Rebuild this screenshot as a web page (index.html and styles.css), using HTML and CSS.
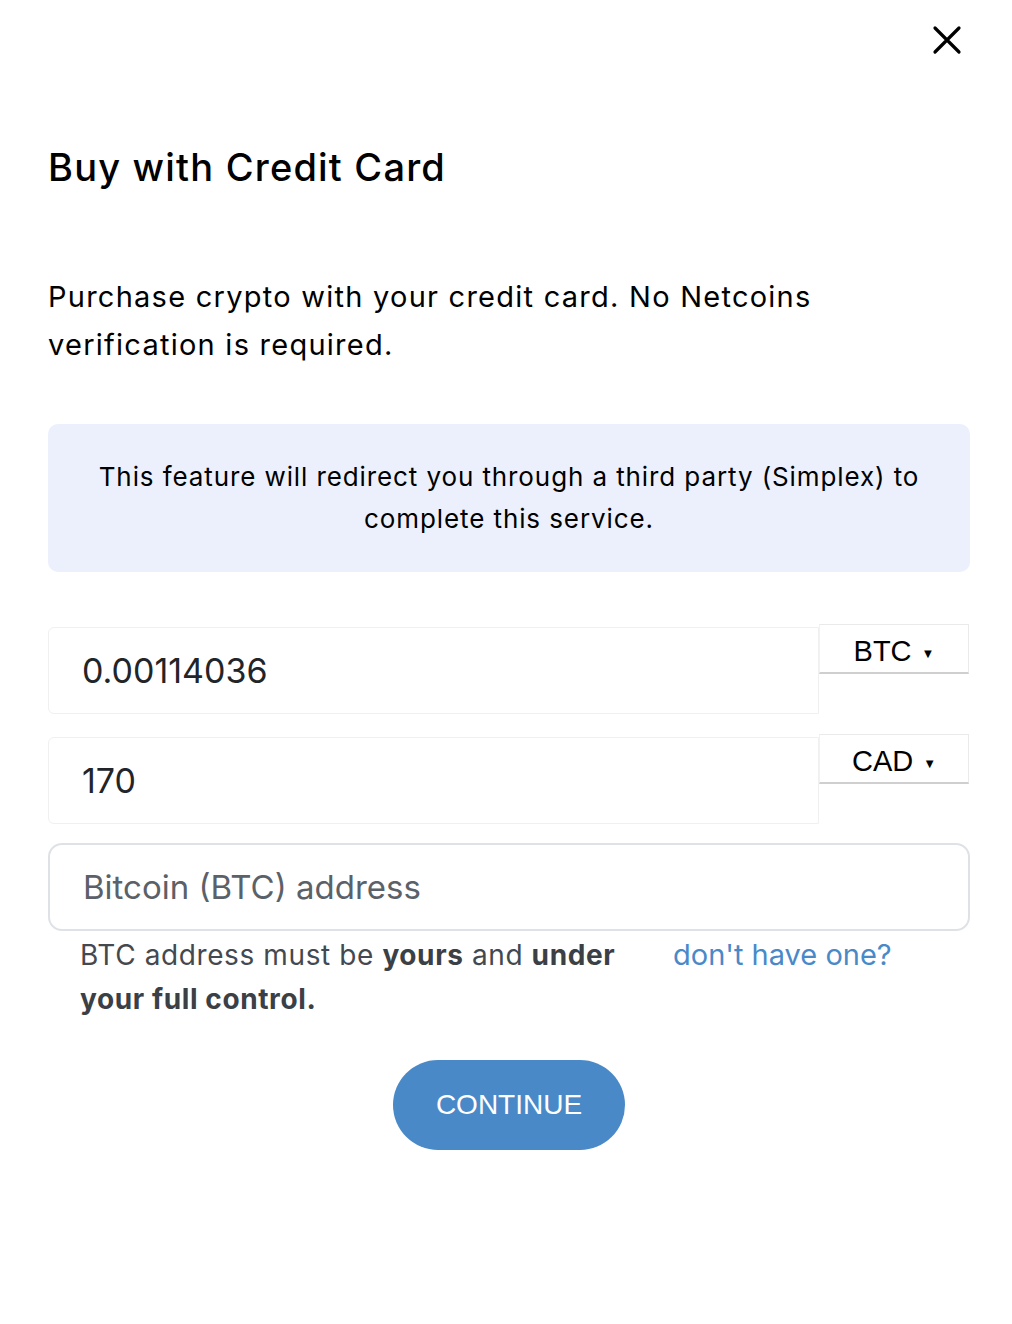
FILE: index.html
```html
<!DOCTYPE html>
<html>
<head>
<meta charset="utf-8">
<link rel="stylesheet" href="styles.css">
</head>
<body>
<div class="modal">
  <div class="top">
    <button class="close" aria-label="Close">
      <svg width="30" height="30" viewBox="0 0 30 30"><path d="M3 3 L27 27 M27 3 L3 27" stroke="#000" stroke-width="3.2" stroke-linecap="round" fill="none"/></svg>
    </button>
  </div>
  <h1 class="title">Buy with Credit Card</h1>
  <p class="lead">Purchase crypto with your credit card. No Netcoins verification is required.</p>
  <div class="info">This feature will redirect you through a third party (Simplex) to complete this service.</div>
  <div class="row">
    <div class="amount">0.00114036</div>
    <div class="select">BTC <span class="caret">▼</span></div>
  </div>
  <div class="row">
    <div class="amount">170</div>
    <div class="select">CAD <span class="caret">▼</span></div>
  </div>
  <div class="address">Bitcoin (BTC) address</div>
  <div class="help">
    <div class="note">BTC address must be <b>yours</b> and <b>under your full control.</b></div>
    <a class="link">don't have one?</a>
  </div>
  <div class="actions">
    <button class="continue">CONTINUE</button>
  </div>
</div>
</body>
</html>
```
FILE: styles.css
```css
* { box-sizing: border-box; }
html, body { margin: 0; background: #fff; }
body { font-family: Inter, "Noto Sans", sans-serif; color: #000; }
.modal { width: 1012px; padding: 0 42px 0 48px; }
.top { display: flex; justify-content: flex-end; padding-top: 25px; height: 56px; margin-right: 8px; }
.close { background: none; border: 0; padding: 0; width: 30px; height: 30px; cursor: pointer; }
.title { font-size: 38px; font-weight: 500; margin: 89px 0 0 0; line-height: 44px; letter-spacing: 1.2px; }
.lead { font-size: 29px; line-height: 48px; margin: 84px 0 0 0; width: 800px; letter-spacing: 1.25px; }
.info { margin-top: 55px; background: #ecf0fc; border-radius: 10px; height: 148px; display: flex; align-items: center; justify-content: center; text-align: center; font-size: 26px; line-height: 42px; padding: 0 40px; letter-spacing: 0.9px; }
.row { display: flex; align-items: flex-start; }
.info + .row { margin-top: 52px; }
.row + .row { margin-top: 20px; }
.amount { flex: 0 0 771px; height: 87px; border: 1px solid #f0f0f0; border-radius: 6px 0 0 6px; margin-top: 3px; padding-left: 33px; display: flex; align-items: center; font-size: 34px; color: #212529; }
.select { flex: 0 0 150px; height: 50px; padding-top: 6px; border: 1px solid #eaeaea; border-bottom: 2px solid #cfcfcf; border-left: 1px solid #f2f2f2; display: flex; align-items: center; justify-content: center; font-family: "Liberation Sans", Arial, sans-serif; font-size: 29px; color: #000; }
.caret { font-size: 13px; margin-left: 10px; margin-top: 4px; }
.address { margin-top: 19px; height: 88px; border: 2px solid #dee2e6; border-radius: 14px; padding-left: 33px; display: flex; align-items: center; font-size: 33px; color: #5b6168; }
.help { display: flex; padding-left: 32px; margin-top: 2px; }
.note { width: 560px; font-size: 28px; line-height: 44px; color: #44494f; letter-spacing: 0.6px; }
.note b { font-weight: 700; color: #3b4046; }
.link { margin-left: 33px; font-size: 29px; line-height: 44px; color: #4a89c8; }
.actions { display: flex; justify-content: center; margin-top: 39px; }
.continue { width: 232px; height: 90px; border-radius: 45px; border: 0; background: #4a89c8; color: #fff; font-family: "Liberation Sans", Arial, sans-serif; font-size: 28px; }
```
